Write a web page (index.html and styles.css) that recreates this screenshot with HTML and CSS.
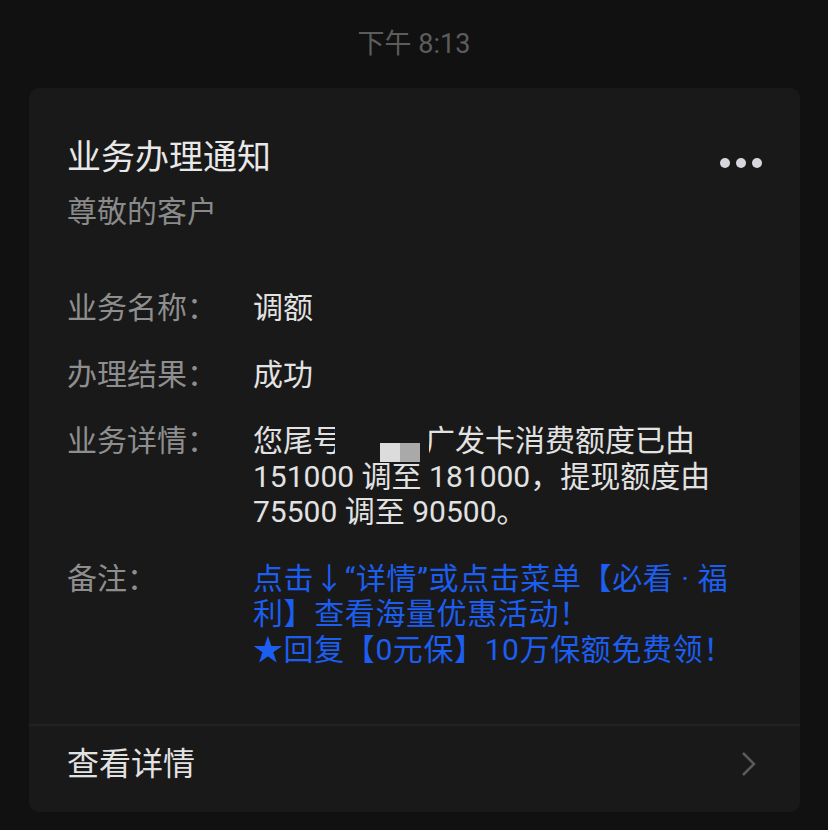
FILE: index.html
```html
<!DOCTYPE html>
<html lang="zh-CN">
<head>
    <meta charset="UTF-8">
    <meta name="viewport" content="width=device-width, initial-scale=1.0">
    <title>业务办理通知</title>
    <link rel="stylesheet" href="styles.css">
</head>
<body>

    <div class="time">下午 8:13</div>

    <div class="card">
        <div class="card-body">
            <div class="card-head">
                <div>
                    <h1 class="title">业务办理通知</h1>
                    <div class="subtitle">尊敬的客户</div>
                </div>
                <svg class="more" width="42" height="10" viewBox="0 0 42 10">
                    <circle cx="5" cy="5" r="5"/>
                    <circle cx="21" cy="5" r="5"/>
                    <circle cx="37" cy="5" r="5"/>
                </svg>
            </div>

            <div class="fields">
                <div class="field">
                    <div class="label">业务名称：</div>
                    <div class="value">调额</div>
                </div>
                <div class="field">
                    <div class="label">办理结果：</div>
                    <div class="value">成功</div>
                </div>
                <div class="field">
                    <div class="label">业务详情：</div>
                    <div class="value">您尾号<span class="mask"><span class="blot"></span></span>广发卡消费额度已由<br>151000 调至 181000，提现额度由<br>75500 调至 90500。</div>
                </div>
                <div class="field">
                    <div class="label">备注：</div>
                    <div class="value blue">点击↓“详情”或点击菜单【必看 · 福<br>利】查看海量优惠活动！<br>★回复【0元保】10万保额免费领！</div>
                </div>
            </div>
        </div>

        <div class="card-foot">
            <span>查看详情</span>
            <svg class="chevron" width="16" height="26" viewBox="0 0 16 26">
                <path d="M2 2 L13 13 L2 24"/>
            </svg>
        </div>
    </div>

</body>
</html>
```

FILE: styles.css
```css
body {
    margin: 0;
    padding: 0;
    background-color: #111111;
    font-family: Roboto, "Noto Sans CJK SC", sans-serif;
}
.time {
    padding-top: 26px;
    line-height: 36px;
    font-size: 27px;
    color: #5c5c5c;
    text-align: center;
}
.card {
    margin: 26px 28px 0 29px;
    background-color: #191919;
    border-radius: 10px;
}
.card-body {
    padding: 47px 38px 57px 38px;
    border-bottom: 2px solid #222222;
}
.card-head {
    display: flex;
    justify-content: space-between;
    align-items: flex-start;
}
.title {
    margin: 0;
    font-size: 34px;
    font-weight: normal;
    line-height: 44px;
    color: #e8e8e8;
}
.subtitle {
    margin-top: 15px;
    font-size: 30px;
    line-height: 36px;
    color: #8a8a8a;
}
.more {
    margin-top: 23px;
    fill: #d6d6dc;
}
.fields {
    margin-top: 60px;
    display: flex;
    flex-direction: column;
    gap: 31px;
}
.field {
    display: grid;
    grid-template-columns: 186px 1fr;
    font-size: 30px;
    line-height: 35.5px;
}
.label {
    color: #8e8e8e;
}
.value {
    color: #e2e2e2;
    white-space: nowrap;
}
.blue {
    color: #1c5ef0;
    letter-spacing: 0.6px;
}
.mask {
    position: relative;
    display: inline-block;
    vertical-align: top;
    width: 82px;
    height: 35.5px;
    margin: 0 -4px 0 -8px;
    padding: 0 4px 0 8px;
    background-color: #191919;
}
.blot {
    display: block;
    width: 40px;
    height: 19px;
    margin: 20px 0 0 37px;
    background: linear-gradient(90deg, #dcdcdc 50%, #a9a9a9 50%);
}
.card-foot {
    display: flex;
    justify-content: space-between;
    align-items: center;
    padding: 18px 43px 28px 38px;
    font-size: 32px;
    line-height: 40px;
    color: #e2e2e2;
}
.chevron {
    fill: none;
    stroke: #5a5a5a;
    stroke-width: 2.5;
}
```
